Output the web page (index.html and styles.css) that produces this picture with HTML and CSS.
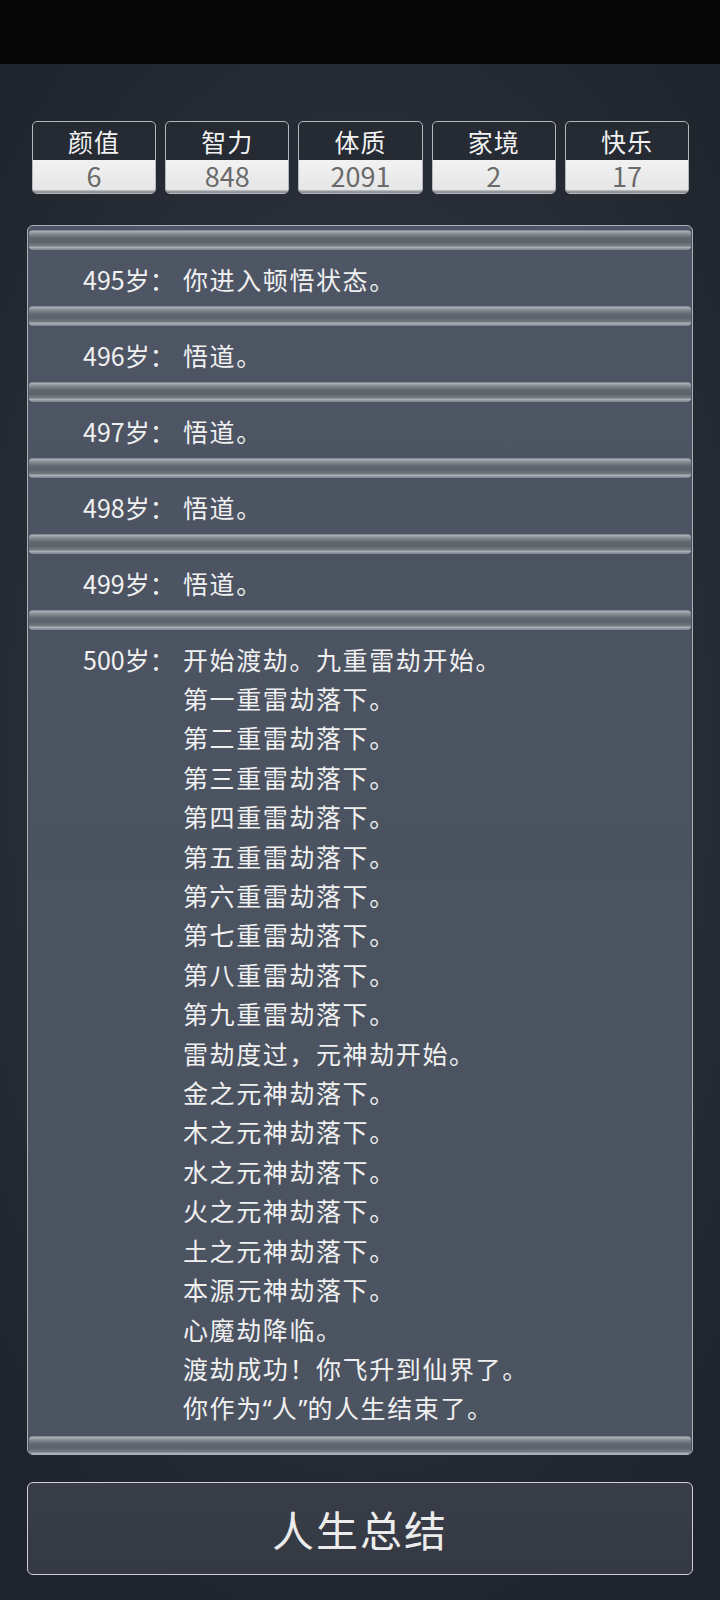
FILE: index.html
```html
<!DOCTYPE html>
<html lang="zh-CN">
  <head>
    <meta charset="UTF-8" />
    <meta name="viewport" content="width=device-width, initial-scale=1.0" />
    <title>人生重开模拟器</title>
    <link rel="stylesheet" href="styles.css">
  </head>
  <body>
    <div class="statusbar"></div>
    <main class="screen">
      <ul class="stats">
        <li class="stat"><span class="stat-name">颜值</span><span class="stat-value">6</span></li>
        <li class="stat"><span class="stat-name">智力</span><span class="stat-value">848</span></li>
        <li class="stat"><span class="stat-name">体质</span><span class="stat-value">2091</span></li>
        <li class="stat"><span class="stat-name">家境</span><span class="stat-value">2</span></li>
        <li class="stat"><span class="stat-name">快乐</span><span class="stat-value">17</span></li>
      </ul>

      <ul class="log">
        <li class="entry">
          <span class="age">495岁：</span>
          <div class="event">你进入顿悟状态。</div>
        </li>
        <li class="entry">
          <span class="age">496岁：</span>
          <div class="event">悟道。</div>
        </li>
        <li class="entry">
          <span class="age">497岁：</span>
          <div class="event">悟道。</div>
        </li>
        <li class="entry">
          <span class="age">498岁：</span>
          <div class="event">悟道。</div>
        </li>
        <li class="entry">
          <span class="age">499岁：</span>
          <div class="event">悟道。</div>
        </li>
        <li class="entry">
          <span class="age">500岁：</span>
          <div class="event">
            <p>开始渡劫。九重雷劫开始。</p>
            <p>第一重雷劫落下。</p>
            <p>第二重雷劫落下。</p>
            <p>第三重雷劫落下。</p>
            <p>第四重雷劫落下。</p>
            <p>第五重雷劫落下。</p>
            <p>第六重雷劫落下。</p>
            <p>第七重雷劫落下。</p>
            <p>第八重雷劫落下。</p>
            <p>第九重雷劫落下。</p>
            <p>雷劫度过，元神劫开始。</p>
            <p>金之元神劫落下。</p>
            <p>木之元神劫落下。</p>
            <p>水之元神劫落下。</p>
            <p>火之元神劫落下。</p>
            <p>土之元神劫落下。</p>
            <p>本源元神劫落下。</p>
            <p>心魔劫降临。</p>
            <p>渡劫成功！你飞升到仙界了。</p>
            <p>你作为<span class="quote">“</span>人<span class="quote">”</span>的人生结束了。</p>
          </div>
        </li>
      </ul>

      <button type="button" class="summary">人生总结</button>
    </main>
  </body>
</html>
```

FILE: styles.css
```css
* {
  box-sizing: border-box;
}
body {
  margin: 0;
  width: 720px;
  height: 1600px;
  overflow: hidden;
  font-family: "Noto Sans CJK SC", "Noto Sans", sans-serif;
  background-color: #050505;
}
.statusbar {
  height: 64px;
  background-color: #060606;
}
.screen {
  height: 1536px;
  padding: 57px 27px 0;
  background: radial-gradient(ellipse 70% 60% at 50% 45%, #2e333e 0%, #292e38 55%, #20242c 100%);
}
.stats {
  list-style: none;
  margin: 0 4px 0 5px;
  padding: 0;
  display: grid;
  grid-template-columns: repeat(5, 1fr);
  gap: 9px;
}
.stat {
  display: flex;
  flex-direction: column;
  border: 1.5px solid #b3b7be;
  border-radius: 5px;
  overflow: hidden;
  background-color: #252a33;
}
.stat-name {
  height: 38px;
  line-height: 38px;
  text-align: center;
  font-size: 25px;
  letter-spacing: 1px;
  color: #f2f2f2;
}
.stat-value {
  height: 33px;
  line-height: 31px;
  text-align: center;
  font-size: 27px;
  color: #6a6a6a;
  background: linear-gradient(to bottom, #f2f2f2 0%, #e6e6e6 90%, #9a9da3 94%, #8a8d93 100%);
}
.log {
  list-style: none;
  margin: 31px 0 0;
  padding: 4px 0 0;
  border: 1px solid #aab0b9;
  border-radius: 6px;
  overflow: hidden;
  background: linear-gradient(to bottom, #4e5665 0%, #4b5361 50%, #4c5462 100%);
  color: #f0f0f0;
  font-size: 25px;
  line-height: 39.4px;
}
.entry::before,
.log::after {
  content: "";
  display: block;
  height: 19.6px;
  margin: 0 1px;
  border-radius: 4px;
  background: linear-gradient(
    to bottom,
    #737983 0,
    #a8adb4 1.5px,
    #858a93 4px,
    #62676f 8px,
    #5d626b 12px,
    #737881 15.5px,
    #abb0b7 17.5px,
    #808690 19.6px
  );
}
.log::after {
  height: 18px;
  border-radius: 4px 4px 0 0;
}
.entry {
  display: block;
  overflow: hidden;
}
.age {
  float: left;
  width: 100px;
  padding: 10px 0 0 55px;
  white-space: nowrap;
}
.event {
  margin-left: 155px;
  padding: 10px 0 7px;
  letter-spacing: 1.6px;
}
.event p {
  margin: 0;
}
.quote {
  font-family: "Noto Sans", sans-serif;
  letter-spacing: 0;
}
.summary {
  display: block;
  width: 100%;
  height: 93px;
  margin-top: 27px;
  padding: 0;
  border: 1.5px solid #cdd1d7;
  border-radius: 6px;
  background: linear-gradient(to bottom, #383d47 0%, #343943 100%);
  color: #ececec;
  font-family: "Noto Sans CJK SC", "Noto Sans", sans-serif;
  font-size: 42px;
  letter-spacing: 2px;
  cursor: pointer;
}
```
